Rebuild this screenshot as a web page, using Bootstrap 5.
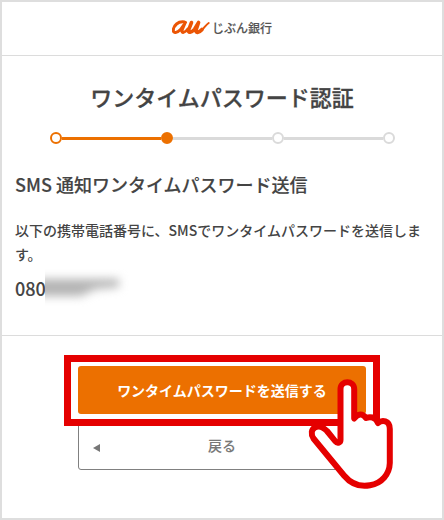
<!DOCTYPE html>
<html lang="ja">
<head>
<meta charset="utf-8">
<meta name="viewport" content="width=device-width, initial-scale=1">
<title>ワンタイムパスワード認証</title>
<link href="https://cdn.jsdelivr.net/npm/bootstrap@5.3.0/dist/css/bootstrap.min.css" rel="stylesheet">
<style>
body{font-family:"Noto Sans CJK JP",sans-serif;color:#444;font-weight:500}
.screen{width:444px;height:520px;border:2px solid #dedede}
.site-head{height:54px;border-bottom:1px solid #dcdcdc}
.brand-mark{margin-top:-1px}
.bank-name{font-size:12px;line-height:18px;color:#555;-webkit-text-stroke:.15px #555;margin-top:-2px}
.page-title{font-size:22px;line-height:32px;margin-top:24px;font-weight:500;-webkit-text-stroke:.3px #444}
.steps{margin:20px 47px 0 48px;height:12px}
.step-dot{width:12px;height:12px;border:2px solid #dadada;background:#fff}
.step-dot.done{border-color:#ec7000}
.step-dot.current{border-color:#ec7000;background:#ec7000}
.step-line{height:3px;background:#dadada}
.step-line.done{background:#ec7000}
.intro{padding:27px 13px 0;height:192px;border-bottom:1px solid #dcdcdc}
.section-title{font-size:18px;line-height:26px;font-weight:500;-webkit-text-stroke:.15px #444}
.message{font-size:14px;line-height:24px;margin-top:21px}
.phone{font-size:18px;line-height:26px;margin-top:9px;-webkit-text-stroke:.1px #444}
.mask{width:90px;height:38px;margin:-6px 0 -6px -1px}
.actions{padding:19px 62px 0}
.focus-box{width:316px;height:71px;border:7px solid #e50000;padding:4px 7px;z-index:1}
.btn-send{height:48px;background:#ec7000;border:0;border-radius:3px;color:#fff;font-size:14px;font-weight:700}
.btn-back{width:288px;height:49px;margin:-5px auto 0;border:1px solid #808080;border-radius:3px;color:#777;font-size:14px;font-weight:500;-webkit-text-stroke:.1px #777}
.back-arrow{left:14px;top:22px}
.hand{left:305px;top:375px;z-index:2}
</style>
</head>
<body>
<main class="screen position-relative bg-white overflow-hidden">
  <header class="site-head d-flex justify-content-center align-items-center">
    <svg class="brand-mark" width="40" height="18" viewBox="0 0 40 18" role="img" aria-label="au" fill="none" stroke="#eb5505" stroke-linecap="round" stroke-linejoin="round">
      <path stroke-width="3" d="M12.500 3C6 2 1.500 6.500 1.300 11.200C1.300 14.500 5 14.200 8.500 10.500L13.500 3.500M13.300 3.500L10 11.200C9.300 14.500 13 14 15.800 10"/>
      <path stroke-width="3.600" d="M19.500 3.500L16.700 10.800C15.600 14.500 19.500 14 22.700 10L26.600 3.500L24.100 10.800C23.100 14.500 27 14 30 10.500"/>
      <path stroke-width="2" d="M29.500 11.500C32.500 8.500 34 5.700 36.700 4"/>
    </svg>
    <span class="bank-name">じぶん銀行</span>
  </header>
  <h1 class="page-title text-center mb-0">ワンタイムパスワード認証</h1>
  <div class="steps d-flex align-items-center">
    <span class="step-dot done rounded-circle"></span><span class="step-line done flex-fill"></span>
    <span class="step-dot current rounded-circle"></span><span class="step-line flex-fill"></span>
    <span class="step-dot rounded-circle"></span><span class="step-line flex-fill"></span>
    <span class="step-dot rounded-circle"></span>
  </div>
  <section class="intro">
    <h2 class="section-title mb-0">SMS 通知ワンタイムパスワード送信</h2>
    <p class="message mb-0">以下の携帯電話番号に、SMSでワンタイムパスワードを送信します。</p>
    <div class="phone d-flex align-items-center">080<svg class="mask" viewBox="0 0 90 38" aria-hidden="true">
      <defs><filter id="soft" filterUnits="userSpaceOnUse" x="-20" y="-15" width="130" height="70" color-interpolation-filters="sRGB"><feGaussianBlur stdDeviation="5"/></filter></defs>
      <path filter="url(#soft)" fill="#b4b4b4" d="M-14 10H74V18L50 20L36 27H-14Z"/>
    </svg></div>
  </section>
  <div class="actions">
    <div class="focus-box position-relative bg-white">
      <button class="btn btn-send w-100 p-0">ワンタイムパスワードを送信する</button>
    </div>
    <button class="btn btn-back d-block bg-white p-0 position-relative">
      <svg class="back-arrow position-absolute" width="7" height="8" viewBox="0 0 7 8" aria-hidden="true"><path fill="#777" d="M7 0V8L0 4Z"/></svg>戻る
    </button>
  </div>
  <svg class="hand position-absolute" width="90" height="116" viewBox="307 377 90 116" aria-hidden="true">
    <path fill="#fff" stroke="#e50000" stroke-width="6" stroke-linejoin="round" d="M354.200 418.500V389C354.200 380 340.500 380 340.500 389V440C340.500 442.500 337.500 444 335.500 441.500L327 431C318 421.500 307.500 429 313.500 438.500L344 475.500C352 485 361 487 370 485.300C382 483 389.500 474 389.800 463V429C389.800 420 382 419.500 378 423C376 416.500 369.500 416.500 366 418C362.500 413 358 413.500 354.200 418.500Z"/>
  </svg>
</main>
<script src="https://cdn.jsdelivr.net/npm/bootstrap@5.3.0/dist/js/bootstrap.bundle.min.js"></script>
</body>
</html>
